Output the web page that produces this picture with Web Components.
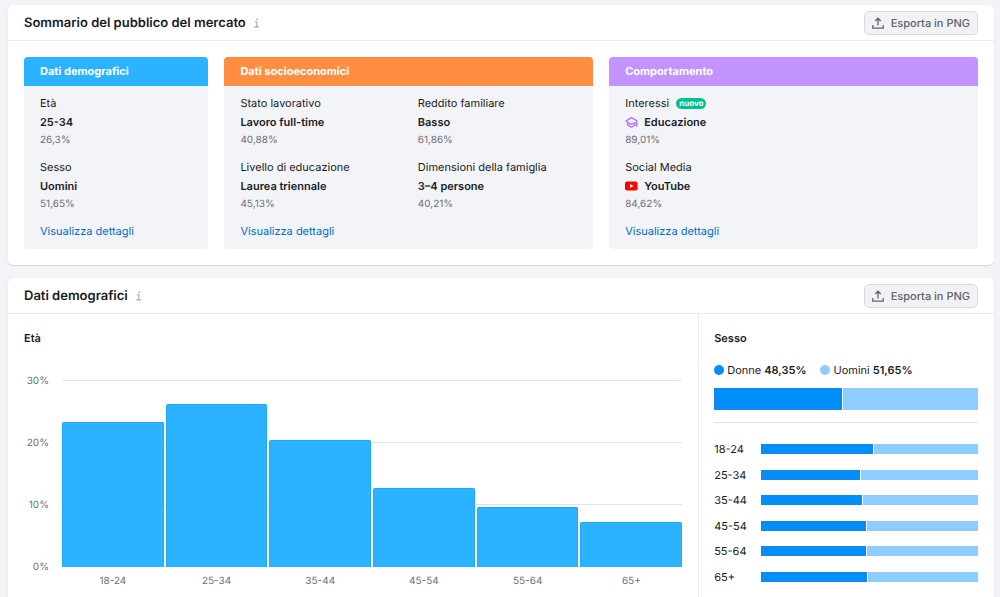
<!DOCTYPE html>
<html lang="it">
<head>
<meta charset="utf-8">
<meta name="viewport" content="width=device-width, initial-scale=1">
<title>Sommario del pubblico del mercato</title>
<style>
  body { margin: 0; background: #f3f4f8; color: #191b23; font: 11px/20px Inter, "Liberation Sans", sans-serif; text-rendering: geometricPrecision; }
</style>
</head>
<body>
<audience-page></audience-page>

<script>
const define = (name, html, setup) => {
  const template = document.createElement('template');
  template.innerHTML = html;
  customElements.define(name, class extends HTMLElement {
    connectedCallback() {
      if (this.shadowRoot) return;
      const root = this.attachShadow({ mode: 'open' });
      root.append(template.content.cloneNode(true));
      if (setup) setup(this, root);
    }
  });
};

define('info-button', `
  <style>
    :host { display: inline-flex; }
    button { display: flex; padding: 0; border: 0; background: none; color: #a4a7b3; cursor: pointer; }
  </style>
  <button type="button" aria-label="Informazioni">
    <svg width="6" height="10" viewBox="0 0 6 10" fill="none" stroke="currentColor" stroke-width="1.1">
      <path d="M.8 3.8H3L2.6 8.8M.3 8.9H4.8"/><path d="M2.4 .6h1.5v1.5H2.4z" fill="currentColor" stroke="none"/>
    </svg>
  </button>`);

define('export-button', `
  <style>
    :host { display: block; }
    button {
      display: flex; align-items: center; gap: 7px; height: 24px; padding: 0 7px;
      border: 1px solid #d9dade; border-radius: 5px; background: #f1f2f4;
      color: #5f626d; font: 500 11px/16px Inter, "Liberation Sans", sans-serif;
      text-rendering: inherit; cursor: pointer;
    }
  </style>
  <button type="button">
    <svg width="12" height="12" viewBox="0 0 12 12" fill="none" stroke="currentColor" stroke-width="1.3">
      <path d="M.8 8v3.2h10.4V8M6 8.6V1.4M3.3 4L6 1.2L8.7 4"/>
    </svg>
    <span><slot></slot></span>
  </button>`);

define('panel-card', `
  <style>
    :host { display: block; background: #fff; border-radius: 5px; box-shadow: 0 0 1px #c4c7cf80, 0 1px 1px #c4c7cf99; }
    header { display: flex; align-items: center; box-sizing: border-box; height: 36px; padding: 0 16px; border-bottom: 1px solid #ebecf0; }
    h2 { margin: 0 8px 0 0; padding-top: 1px; font-size: 13px; line-height: 20px; font-weight: 600; }
    export-button { margin-left: auto; }
  </style>
  <header><h2><slot name="title"></slot></h2><info-button></info-button><export-button>Esporta in PNG</export-button></header>
  <slot></slot>`);

define('summary-tile', `
  <style>
    :host { display: block; background: #f3f4f8; border-radius: 4px; overflow: hidden; }
    h3 { margin: 0; padding: 0 16px; background: var(--accent); color: #fff; font-size: 11px; line-height: 29px; font-weight: 700; }
    .body { padding: 7px 16px 8px; }
    .facts { display: grid; grid-template-columns: var(--columns, 1fr); gap: 8px 18px; margin-bottom: 8px; }
    a { color: #006dca; text-decoration: none; }
  </style>
  <h3><slot name="title"></slot></h3>
  <div class="body"><div class="facts"><slot></slot></div><a href="#dettagli">Visualizza dettagli</a></div>`);

define('audience-fact', `
  <style>
    :host { display: block; }
    .label { display: flex; align-items: center; gap: 7px; line-height: 20px; }
    .value { display: flex; align-items: center; gap: 6px; line-height: 18px; font-weight: 600; }
    .share { font-size: 10px; line-height: 18px; color: #6c6e79; }
  </style>
  <div class="label"><slot name="label"></slot><slot name="badge"></slot></div>
  <div class="value"><slot name="icon"></slot><slot></slot></div>
  <div class="share"><slot name="share"></slot></div>`);

define('new-badge', `
  <style>
    :host { display: block; padding: 0 3px; border-radius: 6px; background: #00c192; color: #fff; font-size: 8px; line-height: 11px; font-weight: 700; }
  </style><slot></slot>`);

define('age-chart', `
  <style>
    :host { display: block; }
    .plot { display: grid; }
    .plot > * { grid-area: 1 / 1; }
    .ticks { display: grid; gap: 46px; }
    .tick { display: flex; align-items: center; height: 16px; color: #6c6e79; font-size: 10px; line-height: 16px; }
    .tick span { box-sizing: border-box; width: 38px; padding: 1px 13px 0 0; text-align: right; }
    .tick i { flex: 1; height: 1px; background: #e0e1e9; }
    .bars, .ages { display: grid; grid-template-columns: repeat(6, 1fr); gap: 2px; margin-left: 38px; }
    .bars { align-items: end; padding: 8px 0 7px; }
    .bars div { box-sizing: border-box; border: 1px solid #1cabfc; border-bottom-width: 0; border-radius: 2px 2px 0 0; background: #2bb3ff; }
    .ages { color: #6c6e79; font-size: 10px; line-height: 14px; text-align: center; }
  </style>
  <div class="plot"><div class="ticks"></div><div class="bars"></div></div>
  <div class="ages"></div>`,
  (host, root) => {
    const data = [['18-24', 23.3], ['25-34', 26.2], ['35-44', 20.3], ['45-54', 12.7], ['55-64', 9.6], ['65+', 7.3]];
    root.querySelector('.ticks').innerHTML = [30, 20, 10, 0].map(t => `<div class="tick"><span>${t}%</span><i></i></div>`).join('');
    root.querySelector('.bars').innerHTML = data.map(([, v]) => `<div style="height:${v / 30 * 100}%"></div>`).join('');
    root.querySelector('.ages').innerHTML = data.map(([age]) => `<span>${age}</span>`).join('');
  });

define('split-bar', `
  <style>
    :host { display: flex; gap: 1px; height: var(--bar-height, 10px); }
    .women { box-sizing: border-box; border: 1px solid #1a84ee; background: #008ff8; }
    .men { flex: 1; background: #8ecdff; }
  </style>
  <div class="women"></div><div class="men"></div>`,
  (host, root) => { root.querySelector('.women').style.width = host.getAttribute('women') + '%'; });

define('gender-chart', `
  <style>
    :host { display: block; }
    .legend { display: flex; gap: 14px; line-height: 20px; }
    .legend span { display: flex; align-items: center; gap: 3px; }
    .legend i { width: 10px; height: 10px; border-radius: 50%; background: #008ff8; }
    .legend .men { background: #8ecdff; }
    b { font-weight: 600; }
    .total { --bar-height: 22px; margin: 8px 0 12px; }
    hr { height: 1px; margin: 0 0 16px; border: 0; background: #e0e1e9; }
    .rows { display: flex; flex-direction: column; justify-content: space-between; height: 148px; }
    .row { display: grid; grid-template-columns: 47px 1fr; align-items: center; line-height: 20px; }
  </style>
  <div class="legend"><span><i></i>Donne <b>48,35%</b></span><span><i class="men"></i>Uomini <b>51,65%</b></span></div>
  <split-bar class="total" women="48.35"></split-bar>
  <hr>
  <div class="rows"></div>`,
  (host, root) => {
    const data = [['18-24', 51.7], ['25-34', 45.7], ['35-44', 46.7], ['45-54', 48.5], ['55-64', 48.5], ['65+', 49]];
    root.querySelector('.rows').innerHTML = data.map(([age, w]) =>
      `<div class="row"><span>${age}</span><split-bar women="${w}"></split-bar></div>`).join('');
  });

define('audience-page', `
  <style>
    :host { display: grid; gap: 13px; padding: 5px 6px 12px 8px; }
    .tiles { display: grid; grid-template-columns: 1fr 2fr 2fr; gap: 16px; padding: 16px; }
    .blue { --accent: #2bb3ff; }
    .orange { --accent: #ff8e43; --columns: 1fr 1fr; }
    .violet { --accent: #c394ff; }
    svg { display: block; }
    .charts { display: grid; grid-template-columns: 7fr 3fr; }
    section { padding: 14px 16px 16px; }
    section + section { border-left: 1px solid #ebecf0; padding-left: 15px; }
    h3 { margin: 0; font-size: 11px; line-height: 20px; font-weight: 600; }
    age-chart { margin-top: 24px; }
    gender-chart { margin-top: 12px; }
  </style>
  <panel-card>
    <span slot="title">Sommario del pubblico del mercato</span>
    <div class="tiles">
      <summary-tile class="blue"><span slot="title">Dati demografici</span>
        <audience-fact><span slot="label">Età</span>25-34<span slot="share">26,3%</span></audience-fact>
        <audience-fact><span slot="label">Sesso</span>Uomini<span slot="share">51,65%</span></audience-fact>
      </summary-tile>
      <summary-tile class="orange"><span slot="title">Dati socioeconomici</span>
        <audience-fact><span slot="label">Stato lavorativo</span>Lavoro full-time<span slot="share">40,88%</span></audience-fact>
        <audience-fact><span slot="label">Reddito familiare</span>Basso<span slot="share">61,86%</span></audience-fact>
        <audience-fact><span slot="label">Livello di educazione</span>Laurea triennale<span slot="share">45,13%</span></audience-fact>
        <audience-fact><span slot="label">Dimensioni della famiglia</span>3–4 persone<span slot="share">40,21%</span></audience-fact>
      </summary-tile>
      <summary-tile class="violet"><span slot="title">Comportamento</span>
        <audience-fact><span slot="label">Interessi</span><new-badge slot="badge">nuovo</new-badge>
          <svg slot="icon" width="13" height="12" viewBox="0 0 13 12" fill="none" stroke="#ab6cfe" stroke-width="1.3" stroke-linejoin="round"><path d="M2.8 6.2L1 5L6.3 1.6L11.8 4.8V10.8M2.8 5.6v3.6L6.4 11.3L9.9 9.2V6M3.6 6.8Q6.4 9.8 9.2 6.8"/></svg>
          Educazione<span slot="share">89,01%</span></audience-fact>
        <audience-fact><span slot="label">Social Media</span>
          <svg slot="icon" width="13" height="10" viewBox="0 0 13 10"><rect y=".5" width="12.6" height="9" rx="2" fill="#f00"/><path d="M5 3v4l3.5-2z" fill="#fff"/></svg>
          YouTube<span slot="share">84,62%</span></audience-fact>
      </summary-tile>
    </div>
  </panel-card>
  <panel-card id="dettagli">
    <span slot="title">Dati demografici</span>
    <div class="charts">
      <section><h3>Età</h3><age-chart></age-chart></section>
      <section><h3>Sesso</h3><gender-chart></gender-chart></section>
    </div>
  </panel-card>`);
</script>
</body>
</html>
